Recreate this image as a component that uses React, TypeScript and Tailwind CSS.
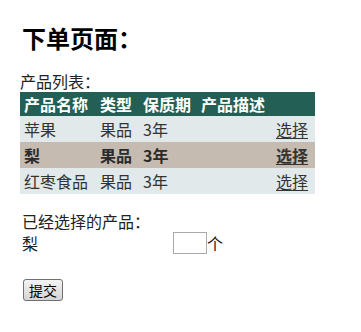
const products = [
  { name: '苹果', type: '果品', shelf: '3年' },
  { name: '梨', type: '果品', shelf: '3年', selected: true },
  { name: '红枣食品', type: '果品', shelf: '3年' },
]

export default function App() {
  return (
    <div
      className="w-[361px] h-[332px] bg-white text-[#222] pl-[20px]"
      style={{ fontFamily: '"Noto Sans CJK SC", "DejaVu Sans", sans-serif' }}
    >
      <h1 className="pt-[25px] pl-[2px] text-[24px] leading-[26px] font-bold text-black">下单页面：</h1>
      <div className="mt-[20px] text-[16px] leading-[20px]">产品列表：</div>
      <table className="mt-[1px] w-[295px] table-fixed border-collapse text-[16px]">
        <colgroup>
          <col className="w-[76px]" />
          <col className="w-[43px]" />
          <col className="w-[58px]" />
          <col />
        </colgroup>
        <thead>
          <tr className="h-[24px] bg-[#235f55] text-white font-bold">
            <th className="pl-[4px] text-left font-bold leading-[24px]">产品名称</th>
            <th className="pl-[4px] text-left font-bold leading-[24px]">类型</th>
            <th className="pl-[4px] text-left font-bold leading-[24px]">保质期</th>
            <th className="pl-[4px] text-left font-bold leading-[24px]">产品描述</th>
          </tr>
        </thead>
        <tbody>
          {products.map((p) => (
            <tr
              key={p.name}
              className={
                p.selected
                  ? 'h-[26px] bg-[#c6bbb0] font-bold text-[#2a2a2a]'
                  : 'h-[26px] bg-[#e1e9eb] text-[#333]'
              }
            >
              <td className="pl-[4px] leading-[26px]">{p.name}</td>
              <td className="pl-[4px] leading-[26px]">{p.type}</td>
              <td className="pl-[4px] leading-[26px]">{p.shelf}</td>
              <td className="pr-[7px] text-right leading-[26px]">
                <a href="#" className="underline underline-offset-2 text-[#333]">选择</a>
              </td>
            </tr>
          ))}
        </tbody>
      </table>
      <div className="mt-[17px] pl-[2px] text-[16px] leading-[20px]">已经选择的产品：</div>
      <div className="mt-[1px] flex items-center pl-[2px] text-[16px] leading-[22px]">
        <span className="w-[151px]">梨</span>
        <input type="text" className="w-[34px] h-[22px] border border-[#a9a9a9] bg-white" />
        <span>个</span>
      </div>
      <div className="mt-[23px] pl-[3px]">
        <button
          type="button"
          className="w-[40px] h-[22px] rounded-[3px] border border-[#707070] bg-gradient-to-b from-[#f4f4f4] to-[#d4d4d4] text-[14px] leading-[18px] text-black"
        >
          提交
        </button>
      </div>
    </div>
  )
}
